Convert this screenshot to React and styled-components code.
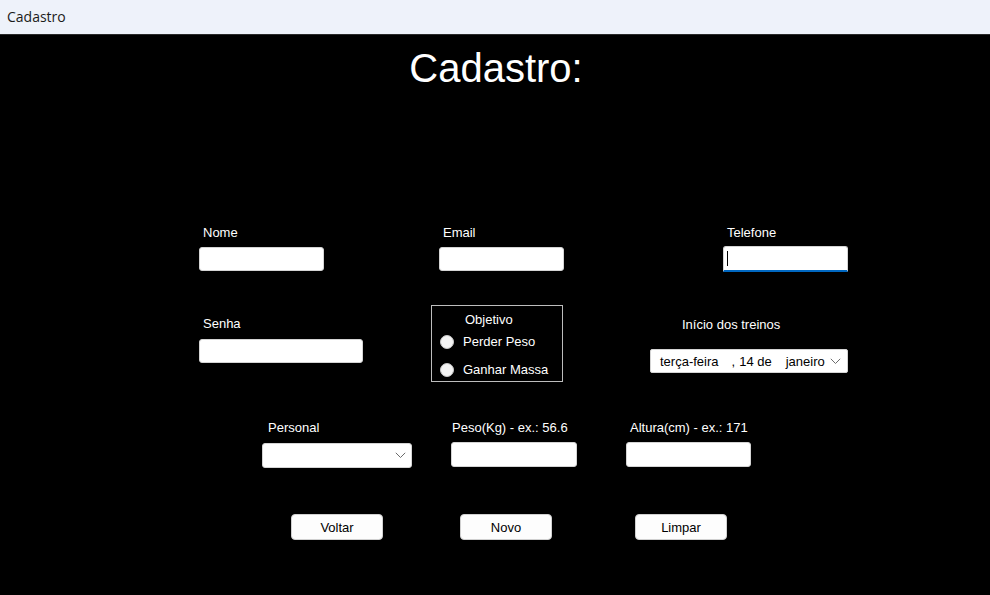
import React from "react";
import styled, { createGlobalStyle } from "styled-components";

const Global = createGlobalStyle`
  html, body { margin: 0; padding: 0; background: #000; }
  body { width: 990px; height: 595px; overflow: hidden; }
  * { box-sizing: border-box; }
`;

const Window = styled.div`
  width: 990px;
  height: 595px;
  display: flex;
  flex-direction: column;
  background: #000;
  font-family: "Liberation Sans", Arial, sans-serif;
`;

const TitleBar = styled.div`
  height: 35px;
  flex: none;
  display: flex;
  align-items: center;
  padding: 0 0 2px 7px;
  background: #eef2fa;
  border-bottom: 1px solid #2a2a2a;
  font-family: "Open Sans", "Noto Sans", sans-serif;
  font-size: 14px;
  color: #1b1b1b;
`;

const Canvas = styled.div`
  flex: 1;
  display: flex;
  flex-direction: column;
  background: #000;
  color: #fff;
`;

const Heading = styled.h1`
  margin: 10px 0 0 0;
  padding-left: 2px;
  text-align: center;
  font-family: "Liberation Sans", Arial, sans-serif;
  font-weight: 400;
  font-size: 40px;
  line-height: 46px;
  color: #fff;
`;

const Row = styled.div`
  display: flex;
  align-items: flex-start;
  margin-top: ${(p) => p.$top}px;
  padding-left: ${(p) => p.$left}px;
`;

const Field = styled.div`
  display: flex;
  flex-direction: column;
  width: ${(p) => p.$w}px;
  margin-left: ${(p) => p.$ml || 0}px;
  margin-top: ${(p) => p.$mt || 0}px;
`;

const Label = styled.label`
  font-size: 13px;
  line-height: 15px;
  color: #fff;
  padding-left: ${(p) => p.$pl ?? 4}px;
  margin-bottom: ${(p) => p.$gap ?? 7}px;
  white-space: nowrap;
`;

const TextBox = styled.div`
  position: relative;
  height: ${(p) => p.$h || 24}px;
  background: #fff;
  border: 1px solid #d4d4d4;
  border-radius: 3px;
  ${(p) =>
    p.$focused &&
    `
    border-bottom: 2px solid #0067c0;
    border-radius: 3px 3px 1px 1px;
  `}
`;

const Caret = styled.span`
  position: absolute;
  left: 3px;
  top: 4px;
  width: 1px;
  height: 15px;
  background: #000;
`;

const Combo = styled.div`
  height: 25px;
  background: #fff;
  border: 1px solid #d4d4d4;
  border-radius: 3px;
  display: flex;
  align-items: center;
  justify-content: flex-end;
  padding-right: 5px;
`;

const DateBox = styled.div`
  height: 24px;
  background: #fff;
  border: 1px solid #d4d4d4;
  border-radius: 2px;
  display: flex;
  align-items: center;
  padding-left: 9px;
  font-size: 13px;
  color: #000;
  white-space: nowrap;
  overflow: hidden;
`;

const DatePart = styled.span`
  margin-left: ${(p) => p.$ml || 0}px;
`;

const ChevronSvg = styled.svg`
  flex: none;
  margin-left: ${(p) => p.$ml}px;
`;

const Chevron = ({ ml = 0 }) => (
  <ChevronSvg $ml={ml} width="11" height="7" viewBox="0 0 11 7">
    <path d="M0.8 0.8 L5.5 5.5 L10.2 0.8" fill="none" stroke="#6b6b6b" strokeWidth="1" />
  </ChevronSvg>
);

const Group = styled.div`
  width: 132px;
  height: 77px;
  margin-left: ${(p) => p.$ml}px;
  border: 1px solid #bdbdbd;
  display: flex;
  flex-direction: column;
  padding: 6px 0 0 8px;
`;

const GroupTitle = styled.div`
  font-size: 13px;
  line-height: 15px;
  padding-left: 25px;
`;

const RadioRow = styled.div`
  display: flex;
  align-items: center;
  height: 15px;
  margin-top: ${(p) => p.$mt}px;
  font-size: 13px;
  white-space: nowrap;
`;

const RadioDot = styled.span`
  flex: none;
  width: 14px;
  height: 14px;
  border-radius: 50%;
  background: #f4f4f4;
  border: 1px solid #c8c8c8;
  margin-right: 9px;
`;

const Button = styled.button`
  width: 92px;
  height: 26px;
  margin-left: ${(p) => p.$ml || 0}px;
  background: #fdfdfd;
  border: 1px solid #d0d0d0;
  border-radius: 4px;
  font-family: "Liberation Sans", Arial, sans-serif;
  font-size: 13px;
  color: #000;
  padding: 0;
`;

export default function App() {
  return (
    <>
      <Global />
      <Window>
        <TitleBar>Cadastro</TitleBar>
        <Canvas>
          <Heading>Cadastro:</Heading>

          <Row $top={134} $left={199}>
            <Field $w={125}>
              <Label>Nome</Label>
              <TextBox />
            </Field>
            <Field $w={125} $ml={115}>
              <Label>Email</Label>
              <TextBox />
            </Field>
            <Field $w={125} $ml={159}>
              <Label $gap={6}>Telefone</Label>
              <TextBox $h={26} $focused>
                <Caret />
              </TextBox>
            </Field>
          </Row>

          <Row $top={33} $left={199}>
            <Field $w={164} $mt={11}>
              <Label $gap={8}>Senha</Label>
              <TextBox />
            </Field>
            <Group $ml={68}>
              <GroupTitle>Objetivo</GroupTitle>
              <RadioRow $mt={7}>
                <RadioDot />
                Perder Peso
              </RadioRow>
              <RadioRow $mt={13}>
                <RadioDot />
                Ganhar Massa
              </RadioRow>
            </Group>
            <Field $w={198} $ml={87} $mt={12}>
              <Label $pl={32} $gap={17}>Início dos treinos</Label>
              <DateBox>
                <DatePart>terça-feira</DatePart>
                <DatePart $ml={13}>,</DatePart>
                <DatePart $ml={4}>14 de</DatePart>
                <DatePart $ml={14}>janeiro</DatePart>
                <Chevron ml={5} />
              </DateBox>
            </Field>
          </Row>

          <Row $top={38} $left={262}>
            <Field $w={150}>
              <Label $pl={6} $gap={8}>Personal</Label>
              <Combo>
                <Chevron />
              </Combo>
            </Field>
            <Field $w={126} $ml={39}>
              <Label $pl={1}>Peso(Kg) - ex.: 56.6</Label>
              <TextBox $h={25} />
            </Field>
            <Field $w={125} $ml={49}>
              <Label $pl={4}>Altura(cm) - ex.: 171</Label>
              <TextBox $h={25} />
            </Field>
          </Row>

          <Row $top={46} $left={291}>
            <Button>Voltar</Button>
            <Button $ml={77}>Novo</Button>
            <Button $ml={83}>Limpar</Button>
          </Row>
        </Canvas>
      </Window>
    </>
  );
}
